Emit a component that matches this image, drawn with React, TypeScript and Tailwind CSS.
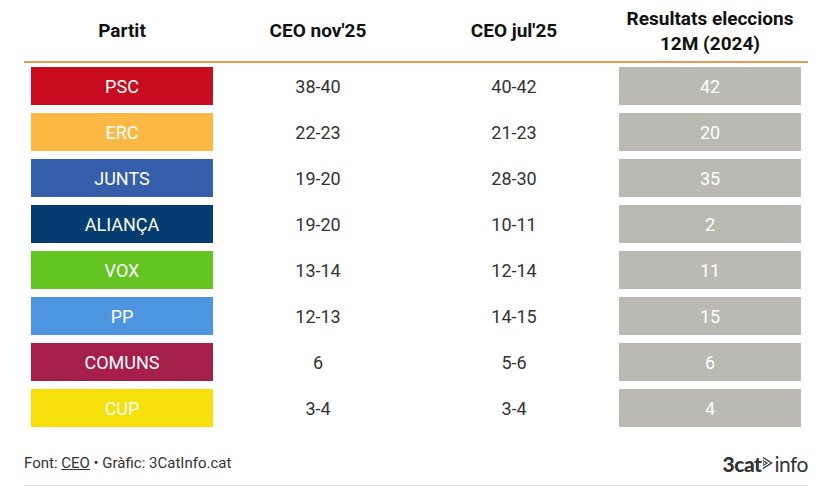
import React from 'react';

interface Row {
  party: string;
  color: string;
  nov: string;
  jul: string;
  seats: number;
}

const rows: Row[] = [
  { party: 'PSC', color: 'bg-[#c90b1f]', nov: '38-40', jul: '40-42', seats: 42 },
  { party: 'ERC', color: 'bg-[#fbb944]', nov: '22-23', jul: '21-23', seats: 20 },
  { party: 'JUNTS', color: 'bg-[#355eab]', nov: '19-20', jul: '28-30', seats: 35 },
  { party: 'ALIANÇA', color: 'bg-[#053d70]', nov: '19-20', jul: '10-11', seats: 2 },
  { party: 'VOX', color: 'bg-[#63c422]', nov: '13-14', jul: '12-14', seats: 11 },
  { party: 'PP', color: 'bg-[#4d95df]', nov: '12-13', jul: '14-15', seats: 15 },
  { party: 'COMUNS', color: 'bg-[#a61f4b]', nov: '6', jul: '5-6', seats: 6 },
  { party: 'CUP', color: 'bg-[#f6df0b]', nov: '3-4', jul: '3-4', seats: 4 },
];

const Logo = () => (
  <div className="flex items-center text-[#333] leading-none">
    <span className="font-['Lato'] font-black text-[21px] tracking-[-0.5px]">3cat</span>
    <svg width="11" height="14" viewBox="0 0 11 14" className="mx-[1px]">
      <path d="M1 1.5 L9.5 7 L1 12.5" fill="none" stroke="#333" strokeWidth="1.4" />
      <path d="M1 4.5 L5 7 L1 9.5" fill="none" stroke="#333" strokeWidth="1.2" />
      <path d="M1 6.6 L1.8 7 L1 7.4" fill="none" stroke="#333" strokeWidth="1" />
    </svg>
    <span className="font-['Lato'] text-[21px] tracking-[-0.5px]">info</span>
  </div>
);

const App: React.FC = () => {
  return (
    <div className="w-[826px] h-[486px] bg-white pl-[24px] pr-[18px] font-['Roboto',sans-serif]">
      {/* Header */}
      <div className="grid grid-cols-4 h-[63px] items-center border-b-2 border-[#e59a55] text-[19px] font-bold text-[#111] text-center leading-[25px]">
        <div>Partit</div>
        <div>CEO nov'25</div>
        <div>CEO jul'25</div>
        <div>
          Resultats eleccions
          <br />
          12M (2024)
        </div>
      </div>

      {/* Rows */}
      <div className="pt-[4px] flex flex-col gap-[8px]">
        {rows.map((r) => (
          <div key={r.party} className="grid grid-cols-4 h-[38px] text-[18px] text-center">
            <div className="px-[7px]">
              <div className={`${r.color} h-full flex items-center justify-center text-white`}>
                {r.party}
              </div>
            </div>
            <div className="flex items-center justify-center text-[#333]">{r.nov}</div>
            <div className="flex items-center justify-center text-[#333]">{r.jul}</div>
            <div className="px-[7px]">
              <div className="bg-[#bab9b2] h-full flex items-center justify-center text-white">
                {r.seats}
              </div>
            </div>
          </div>
        ))}
      </div>

      {/* Footer */}
      <div className="mt-[26px] h-[20px] flex items-center justify-between">
        <div className="text-[15px] text-[#333]">
          Font: <span className="underline">CEO</span> • Gràfic: 3CatInfo.cat
        </div>
        <Logo />
      </div>
      <div className="mt-[12px] border-t border-[#dddddd]" />
    </div>
  );
};

export default App;
